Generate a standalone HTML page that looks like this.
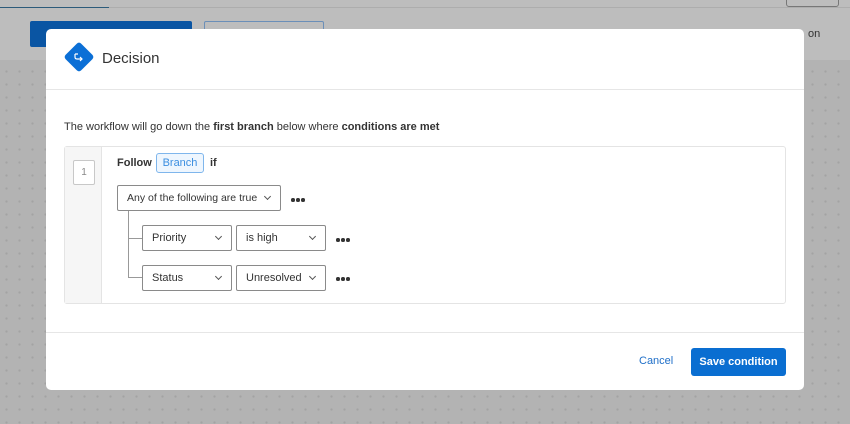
<!DOCTYPE html>
<html><head><style>
*{box-sizing:border-box;margin:0;padding:0}
body{width:850px;height:424px;overflow:hidden;position:relative;font-family:"Liberation Sans",sans-serif;background:#b3b3b3;
background-image:radial-gradient(circle,#a3a3a3 1px,transparent 1.3px);background-size:13px 13px}
.top{position:absolute;left:0;top:0;width:850px;height:60px;background:#bdbdbd}
.tl{position:absolute;left:0;top:7px;width:109px;height:1px;background:#2c5b7a}
.tl2{position:absolute;left:0;top:7px;width:850px;height:1px;background:#adadad}
.modal{position:absolute;left:46px;top:29px;width:758px;height:361px;background:#fff;border-radius:5px}
.hd{height:61px;border-bottom:1px solid #e6e6e6;position:relative}
.hd .t{position:absolute;left:56px;top:21px;font-size:15px;color:#333}
.dia{position:absolute;left:22px;top:17px;width:22px;height:22px;background:#0b6fd6;transform:rotate(45deg);border-radius:3px}
.txt{position:absolute;left:18px;top:92px;font-size:11px;color:#333}
.box{position:absolute;left:18px;top:117px;width:722px;height:158px;border:1px solid #e4e4e4;border-radius:3px}
.side{position:absolute;left:0;top:0;width:37px;height:100%;background:#f6f6f6;border-right:1px solid #e4e4e4}
.num{position:absolute;left:8px;top:13px;width:22px;height:25px;border:1px solid #c8c8c8;border-radius:2px;font-size:10px;color:#888;text-align:center;line-height:24px;background:#fff}
.sel{position:absolute;height:26px;border:1px solid #8a8a8a;border-radius:2px;font-size:11px;color:#333;line-height:24px;padding-left:9px}
.sel:after{content:"";position:absolute;right:10px;top:8px;width:4px;height:4px;border-right:1px solid #555;border-bottom:1px solid #555;transform:rotate(45deg)}
.dots{position:absolute;width:14px;height:4px}
.dots i{position:absolute;top:0;width:3.5px;height:3.5px;border-radius:50%;background:#333}
.ft{position:absolute;left:0;top:303px;width:100%;border-top:1px solid #e6e6e6}
</style></head><body>
<div class="top"></div>
<div class="tl2"></div><div class="tl"></div>
<div style="position:absolute;left:30px;top:21px;width:162px;height:26px;background:#0a55a3;border-radius:2px"></div>
<div style="position:absolute;left:204px;top:21px;width:120px;height:26px;border:1px solid #6b8fb8;border-radius:2px"></div>
<div style="position:absolute;left:786px;top:-3px;width:53px;height:10px;border:1px solid #777;border-radius:3px"></div>
<div style="position:absolute;left:808px;top:28px;font-size:11px;color:#333">on</div>
<div class="modal">
 <div class="hd"><div class="dia"></div>
 <svg style="position:absolute;left:26px;top:21px" width="14" height="14" viewBox="0 0 14 14" fill="none" stroke="#fff" stroke-width="1.2"><path d="M3 4v3q0 2 2 2h5M8 7l2 2-2 2M3 4h3"/></svg>
 <div class="t">Decision</div></div>
 <div class="txt">The workflow will go down the <b>first branch</b> below where <b>conditions are met</b></div>
 <div class="box">
  <div class="side"><div class="num">1</div></div>
  <div style="position:absolute;left:52px;top:10px;font-size:11px;font-weight:bold;color:#333">Follow</div>
  <div style="position:absolute;left:91px;top:6px;width:48px;height:20px;border:1px solid #7fb6ec;background:#eef6fe;border-radius:3px;font-size:11px;color:#3b8ee0;text-align:center;line-height:18px">Branch</div>
  <div style="position:absolute;left:145px;top:10px;font-size:11px;font-weight:bold;color:#333">if</div>
  <div class="sel" style="left:52px;top:38px;width:164px;font-size:10.5px">Any of the following are true</div>
  <div class="dots" style="left:226px;top:51px"><i style="left:0"></i><i style="left:5px"></i><i style="left:10px"></i></div>
  <div style="position:absolute;left:63px;top:64px;width:1px;height:67px;background:#999"></div>
  <div style="position:absolute;left:63px;top:91px;width:14px;height:1px;background:#999"></div>
  <div style="position:absolute;left:63px;top:130px;width:14px;height:1px;background:#999"></div>
  <div class="sel" style="left:77px;top:78px;width:90px">Priority</div>
  <div class="sel" style="left:171px;top:78px;width:90px">is high</div>
  <div class="dots" style="left:271px;top:91px"><i style="left:0"></i><i style="left:5px"></i><i style="left:10px"></i></div>
  <div class="sel" style="left:77px;top:118px;width:90px">Status</div>
  <div class="sel" style="left:171px;top:118px;width:90px">Unresolved</div>
  <div class="dots" style="left:271px;top:130px"><i style="left:0"></i><i style="left:5px"></i><i style="left:10px"></i></div>
 </div>
 <div class="ft"></div>
 <div style="position:absolute;left:593px;top:326px;font-size:11px;color:#1f6fc8">Cancel</div>
 <div style="position:absolute;left:645px;top:319px;width:95px;height:28px;background:#0a6ed1;border-radius:3px;color:#fff;font-size:11px;font-weight:bold;text-align:center;line-height:28px">Save condition</div>
</div>
</body></html>
